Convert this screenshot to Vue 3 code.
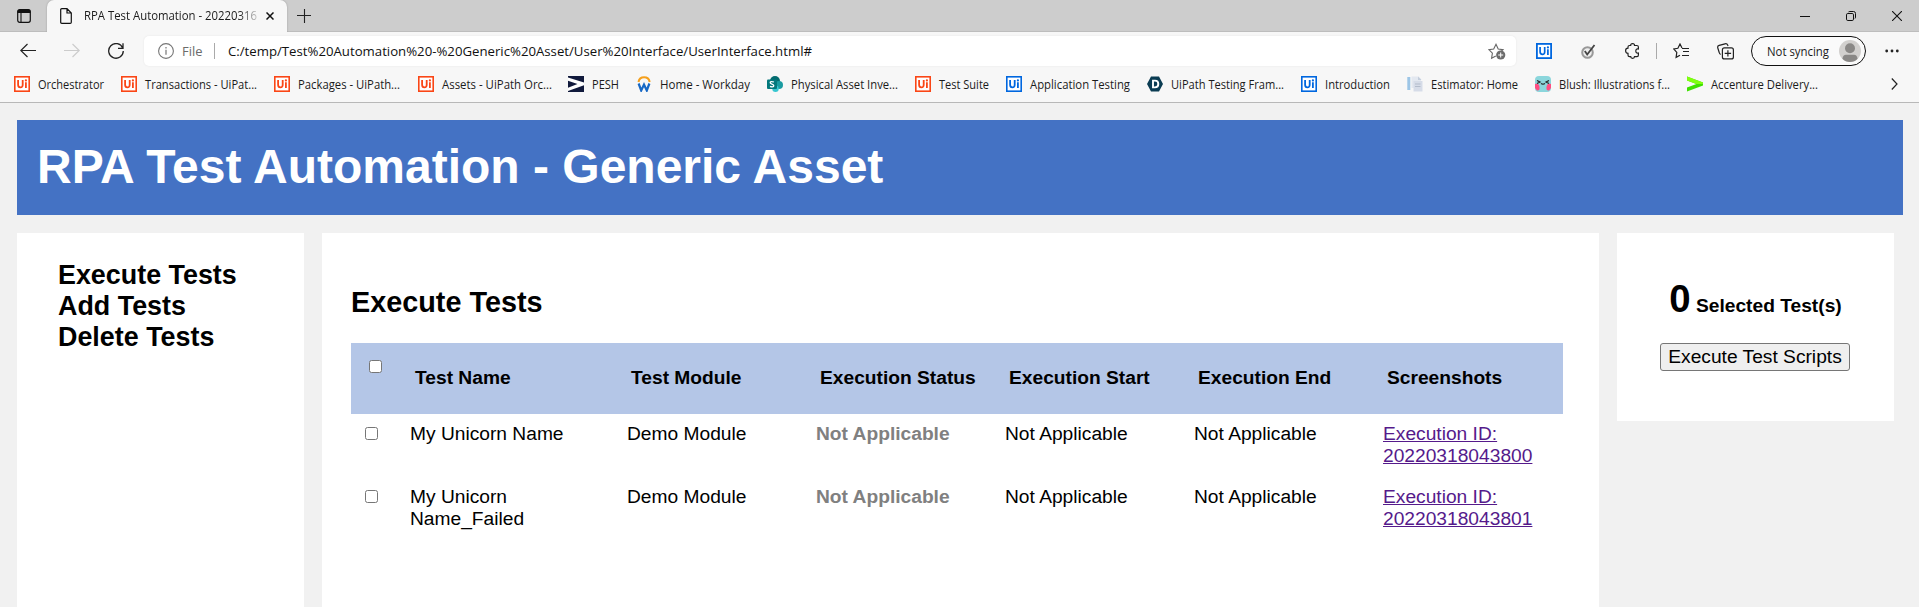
<script setup>
import { ref, h } from 'vue'

// Single line of interface text with a set advance width.
const FitText = (p) =>
  h('svg', { width: p.w + 2, height: 20, style: { display: 'block', flex: 'none', overflow: 'visible' } }, [
    h('text', { x: 0, y: 15, textLength: p.w, lengthAdjust: 'spacingAndGlyphs', fill: p.color || '#1b1b1b', 'font-size': p.size || 12, 'font-family': '"Open Sans", "Noto Sans", sans-serif' }, p.text),
  ])
FitText.props = ['w', 'text', 'size', 'color']

const bookmarks = [
  { t: 'Orchestrator', w: 66, slot: 107, i: 'ui', c: '#fa4616' },
  { t: 'Transactions - UiPat...', w: 112, slot: 153, i: 'ui', c: '#fa4616' },
  { t: 'Packages - UiPath...', w: 102, slot: 144, i: 'ui', c: '#fa4616' },
  { t: 'Assets - UiPath Orc...', w: 110, slot: 150, i: 'ui', c: '#fa4616' },
  { t: 'PESH', w: 27, slot: 68, i: 'pesh' },
  { t: 'Home - Workday', w: 90, slot: 131, i: 'workday' },
  { t: 'Physical Asset Inve...', w: 107, slot: 148, i: 'share' },
  { t: 'Test Suite', w: 50, slot: 91, i: 'ui', c: '#fa4616' },
  { t: 'Application Testing', w: 100, slot: 141, i: 'ui', c: '#0067df' },
  { t: 'UiPath Testing Fram...', w: 113, slot: 154, i: 'hex' },
  { t: 'Introduction', w: 65, slot: 106, i: 'ui', c: '#0067df' },
  { t: 'Estimator: Home', w: 87, slot: 128, i: 'doc' },
  { t: 'Blush: Illustrations f...', w: 111, slot: 152, i: 'blush' },
  { t: 'Accenture Delivery...', w: 107, slot: 140, i: 'acc' },
]
const menu = ['Execute Tests', 'Add Tests', 'Delete Tests']
const heads = ['Test Name', 'Test Module', 'Execution Status', 'Execution Start', 'Execution End', 'Screenshots']
const rows = ref([
  { name: 'My Unicorn Name', id: '20220318043800' },
  { name: 'My Unicorn Name_Failed', id: '20220318043801' },
])
</script>

<template>
  <div class="window">
    <header class="chrome">
      <div class="tabs">
        <svg class="workspace" width="16" height="16" viewBox="0 0 16 16"><rect x="1.7" y="1.7" width="12.6" height="12.6" rx="2" fill="none" stroke="#111" stroke-width="1.2"/><path d="M1.5 3.5Q1.500 1.500 4 1.500H12Q14.500 1.500 14.500 3.500V5H1.500Z" fill="#111"/><path d="M5 5V14" stroke="#111" stroke-width="1.1"/></svg>
        <div class="tab">
          <svg width="12" height="16" viewBox="0 0 12 16" fill="none" stroke="#111" stroke-width="1.2"><path d="M1.8.7H7L11.3 5V14.2Q11.3 15.3 10.2 15.3H1.8Q.7 15.3.7 14.2V1.8Q.7.7 1.8.7ZM7 .7V5H11.3"/></svg>
          <div class="tab-title"><FitText text="RPA Test Automation - 20220316" :w="173" /></div>
          <svg class="tab-close" width="8" height="8" viewBox="0 0 8 8"><path d="M.5.5 7.5 7.5M7.5.5.5 7.5" stroke="#111" stroke-width="1.5"/></svg>
        </div>
        <svg class="plus" width="14" height="14" viewBox="0 0 14 14"><path d="M7.5 0V14M0 6.500H14" stroke="#222" stroke-width="1.1"/></svg>
        <div class="win-controls">
          <svg width="10" height="10" viewBox="0 0 10 10"><path d="M0 5.5H10" stroke="#111"/></svg>
          <svg width="10" height="10" viewBox="0 0 10 10" fill="none" stroke="#111"><rect x=".5" y="2.5" width="7" height="7" rx="1.3"/><path d="M2.5.9Q3 .5 4 .5H7.5Q9.5.5 9.5 2.5V6Q9.5 7 9 7.5"/></svg>
          <svg width="10" height="10" viewBox="0 0 10 10"><path d="M0 0 10 10M10 0 0 10" stroke="#111" stroke-width="1.1"/></svg>
        </div>
      </div>

      <div class="toolbar">
        <svg class="nav" width="16" height="16" viewBox="0 0 16 16" fill="none" stroke="#222" stroke-width="1.2"><path d="M7.5 1 .8 7.500 7.5 14M.8 7.500H16"/></svg>
        <svg class="nav" width="16" height="16" viewBox="0 0 16 16" fill="none" stroke="#ccc" stroke-width="1.2"><path d="M8.5 1 15.2 7.500 8.5 14M15.2 7.500H0"/></svg>
        <svg class="nav" width="16" height="16" viewBox="0 0 16 16" fill="none" stroke="#222" stroke-width="1.3"><path d="M14.7 5A7.3 7.3 0 1 0 15.3 8M15 .3V5.3H10"/></svg>
        <div class="address">
          <svg width="16" height="16" viewBox="0 0 16 16"><circle cx="8" cy="8" r="7.4" fill="none" stroke="#767676" stroke-width="1.1"/><path d="M8 6.8V11.8M8 4V5.4" stroke="#767676" stroke-width="1.2"/></svg>
          <div class="file"><FitText text="File" :w="20.5" :size="13.5" color="#6b6b6b" /></div>
          <i class="rule"></i>
          <FitText text="C:/temp/Test%20Automation%20-%20Generic%20Asset/User%20Interface/UserInterface.html#" :w="584" :size="13.5" color="#111" />
          <svg class="fav-add" width="18" height="17" viewBox="0 0 18 17"><path d="M7.8 13 3.6 15.2 4.4 10.2.9 6.7 5.7 6 8 1.3 10.2 6 15 6.7 13 8.5" fill="none" stroke="#666" stroke-width="1.1"/><circle cx="12.7" cy="12" r="4.6" fill="#6c6c6c"/><path d="M12.7 9.5V14.5M10.2 12H15.2" stroke="#fff"/></svg>
        </div>
        <div class="ext">
          <svg class="e1" width="16" height="16" viewBox="0 0 16 16"><rect x=".9" y=".9" width="14.2" height="14.2" fill="#fff" stroke="#0067df" stroke-width="1.8"/><path d="M4.1 4V8.8Q4.1 11.4 6.4 11.4T8.7 8.8V4M11.9 6.3V12" fill="none" stroke="#0067df" stroke-width="1.7"/><circle cx="11.9" cy="4.4" r="1.1" fill="#0067df"/></svg>
          <svg class="e2" width="15" height="15" viewBox="0 0 15 15"><circle cx="6.5" cy="8.500" r="5.3" fill="#eee" stroke="#999" stroke-width="2"/><path d="M3.8 7 6.2 10.500 13.5 1" fill="none" stroke="#444" stroke-width="1.8"/></svg>
          <svg class="e3" width="15" height="16" viewBox="0 0 15 16"><path d="M3 5.200V4Q3 2.500 4.500 2.500H5.700Q5.500.600 7.600.600T9.500 2.500H11.800Q13.400 2.500 13.400 4V6Q10.800 5.600 10.800 8T13.400 10V12Q13.400 13.600 12 13.600H9.500Q9.500 15.400 7.600 15.400T5.700 13.600H4.500Q3 13.600 3 12V10.300Q.600 10.300.600 7.800T3 5.200Z" fill="none" stroke="#222" stroke-width="1.2"/></svg>
          <i class="rule e4"></i>
          <svg class="e5" width="17" height="16" viewBox="0 0 17 16" fill="none" stroke="#222" stroke-width="1.2"><path d="M9 4.9 7 1 4.9 5.3.7 6 3.8 9.4 3.1 14.4 7 12.3M9 5.500H16M10 8.500H16M9 12.500H16"/></svg>
          <svg class="e6" width="17" height="17" viewBox="0 0 17 17" fill="none" stroke="#222" stroke-width="1.2"><path d="M3.7 11.4Q2.5 11 2.2 9.5L.8 5Q.2 3 2.2 2.4L8 .8Q10 .3 10.8 2.2L11 3"/><rect x="5.4" y="4.9" width="11" height="11" rx="2"/><path d="M10.9 7.2V13.6M7.7 10.4H14.1"/></svg>
        </div>
        <div class="profile">
          <FitText text="Not syncing" :w="62" />
          <svg width="22" height="22" viewBox="0 0 22 22"><circle cx="11" cy="11" r="11" fill="#d2d0ce"/><circle cx="11" cy="8.3" r="5" fill="#8a8886"/><path d="M3.4 18.7Q4 14.7 7 14.7H15Q18 14.7 18.6 18.7Q15.500 22 11 22T3.400 18.700Z" fill="#8a8886"/></svg>
        </div>
        <svg class="more" width="14" height="4" viewBox="0 0 14 4" fill="#222"><circle cx="1.7" cy="2" r="1.4"/><circle cx="7" cy="2" r="1.4"/><circle cx="12.3" cy="2" r="1.4"/></svg>
      </div>

      <div class="bookmarks">
        <div v-for="b in bookmarks" :key="b.t" class="bookmark" :style="{ width: b.slot + 'px' }">
          <svg width="16" height="16" viewBox="0 0 16 16">
            <g v-if="b.i === 'ui'"><rect x=".8" y=".8" width="14.4" height="14.4" fill="#fff" :stroke="b.c" stroke-width="1.6"/><path d="M4.1 4V8.8Q4.1 11.4 6.4 11.4T8.7 8.8V4M11.9 6.3V12" fill="none" :stroke="b.c" stroke-width="1.8"/><circle cx="11.9" cy="4.4" r="1.1" :fill="b.c"/></g>
            <g v-else-if="b.i === 'pesh'"><path d="M0 0H16V16H0Z" fill="#111a3c"/><path d="M0 1.5 16 6.5V9.3L0 15V11.7L9.5 8 0 4.8Z" fill="#fff"/></g>
            <g v-else-if="b.i === 'workday'" fill="none"><path d="M2.5 6A5.700 5.700 0 0 1 13.7 6" stroke="#f5a01d" stroke-width="2"/><path d="M2.6 7.5 5.2 14.5 8 8.5 10.8 14.5 13.4 7.5" stroke="#1768c5" stroke-width="2.2"/></g>
            <g v-else-if="b.i === 'share'"><circle cx="8" cy="5" r="5" fill="#036c70"/><circle cx="12" cy="9" r="4" fill="#1a9ba1"/><circle cx="8.5" cy="12.8" r="3.2" fill="#37c6d0"/><rect y="3.5" width="10" height="9.5" rx="1" fill="#03787c"/><path d="M7 6Q3.2 4.9 3.2 6.7C3.2 8.3 6.8 7.9 6.8 9.7 6.8 11.3 4.5 11 3 10.4" fill="none" stroke="#fff" stroke-width="1.3"/></g>
            <g v-else-if="b.i === 'hex'"><path d="M4 .5H12L16 8 12 15.5H4L0 8Z" fill="#0b3c53"/><path d="M6 4.6H8Q11.3 4.6 11.3 8T8 11.4H6Z" fill="none" stroke="#fff" stroke-width="1.9"/></g>
            <g v-else-if="b.i === 'doc'"><rect x=".3" y="1" width="3" height="13" fill="#9cc5e6"/><path d="M4.500.5H11.5L14 3V12H4.500Z" fill="#e3e8f0"/><path d="M6.500 5H15.500V15.500H6.500Z" fill="#d6dce8"/><path d="M8 8H13.500M8 10.500H13.500" stroke="#b3bccb"/><path d="M11 .5V4H14.500" fill="#c3cddb"/></g>
            <g v-else-if="b.i === 'blush'"><rect width="16" height="16" rx="4" fill="#8bd6dc"/><path d="M0 8Q4 7 4.500 11T2 14.500L0 12ZM16 8Q12 7 11.500 11T14 14.500L16 12Z" fill="#ff4d82"/><path d="M2 4.500 5 6 2 7.500M14 4.500 11 6 14 7.500M6 7.500Q8 8.800 10 7.500" fill="none" stroke="#222" stroke-width="1.2"/></g>
            <g v-else><path d="M0 .5 16 6.5V9.5L0 15.5V11.5L9.5 8 0 4.500Z" fill="#3fe000"/><path d="M0 .5 16 6.5V8H9.5L0 4.500Z" fill="#80ff10"/></g>
          </svg>
          <FitText :text="b.t" :w="b.w" />
        </div>
        <svg class="chevron" width="7" height="12" viewBox="0 0 7 12"><path d="M.8.5 6 6 .8 11.5" fill="none" stroke="#222" stroke-width="1.2"/></svg>
      </div>
    </header>

    <main class="page">
      <div class="banner"><h1>RPA Test Automation - Generic Asset</h1></div>
      <div class="columns">
        <nav class="menu"><div v-for="m in menu" :key="m">{{ m }}</div></nav>
        <section class="content">
          <h2>Execute Tests</h2>
          <div class="row head">
            <span class="box"></span>
            <b v-for="t in heads" :key="t">{{ t }}</b>
          </div>
          <div v-for="r in rows" :key="r.id" class="row">
            <span class="box"></span>
            <span class="name">{{ r.name }}</span>
            <span>Demo Module</span>
            <span class="status">Not Applicable</span>
            <span>Not Applicable</span>
            <span>Not Applicable</span>
            <a>Execution ID: {{ r.id }}</a>
          </div>
        </section>
        <aside class="run">
          <p><strong>0</strong> Selected Test(s)</p>
          <button>Execute Test Scripts</button>
        </aside>
      </div>
    </main>
  </div>
</template>

<style>
body { margin: 0; overflow: hidden; background: #f1f1f1; }
</style>

<style scoped>
* { box-sizing: border-box; }
.window { width: 1919px; height: 607px; overflow: hidden; display: flex; flex-direction: column; background: #f1f1f1; font-family: Arial, "Liberation Sans", sans-serif; color: #000; }
svg { display: block; flex: none; }
.chrome { height: 103px; flex: none; background: #f7f7f7; border-bottom: 1px solid #b8b8b8; }
.tabs { height: 32px; display: flex; background: #cdcdcd; box-shadow: inset 0 -1px #bdbdbd; }
.workspace { margin: 8px 0 0 16px; }
.tab { width: 240px; height: 32px; margin-left: 15px; padding: 0 0 0 13px; background: #f7f7f7; border-radius: 7px 7px 0 0; display: flex; align-items: center; box-shadow: 0 0 2px #999; clip-path: inset(0 -2px 0 -2px); }
.tab-title { margin: -2px 0 0 12px; height: 20px; width: 176px; mask-image: linear-gradient(to right, #000 155px, transparent 178px); }
.tab-close { margin-left: 6px; }
.plus { margin: 9px 0 0 10px; }
.win-controls { margin: 11px 17px 0 auto; display: flex; gap: 36px; }
.toolbar { height: 38px; display: flex; align-items: center; padding-left: 20px; }
.nav { margin-right: 28px; }
.nav + .nav + .nav { margin-right: 20px; }
.address { width: 1372px; height: 30px; background: #fff; border-radius: 5px; display: flex; align-items: center; padding-left: 14px; box-shadow: 0 0 2px #e4e4e4; }
.file { margin-left: 8px; }
.rule { width: 1px; height: 16px; background: #aaa; flex: none; }
.address .rule { margin: 0 13px 0 9px; }
.fav-add { margin: 0 10px 0 auto; }
.ext { display: flex; align-items: center; width: 235px; }
.e1 { margin-left: 20px; }
.e2 { margin-left: 29px; }
.e3 { margin-left: 29px; }
.e4 { margin-left: 16px; }
.e5 { margin-left: 16px; }
.e6 { margin-left: 27px; }
.profile { width: 115px; height: 30px; border: 1px solid #111; border-radius: 15px; display: flex; align-items: center; padding-left: 15px; gap: 8px; background: #fafafa; }
.more { margin-left: 19px; }
.bookmarks { height: 32px; display: flex; align-items: center; padding: 0 0 4px 14px; }
.bookmark { display: flex; align-items: center; gap: 8px; flex: none; }
.bookmark > svg:last-child { margin-top: -1px; }
.chevron { margin-left: 64px; }
.page { padding: 17px 16px 0 17px; }
.banner { height: 95px; background: #4472c4; padding: 19px 20px; }
h1 { margin: 0; color: #fff; font-size: 48px; line-height: 55px; white-space: nowrap; }
.columns { display: flex; align-items: flex-start; margin-top: 18px; }
.menu { width: 287px; height: 374px; background: #fff; padding: 27px 0 0 41px; font-size: 26.88px; font-weight: 700; line-height: 31px; }
.content { width: 1277px; height: 374px; margin-left: 18px; background: #fff; padding: 53px 36px 0 29px; font-size: 19.2px; }
h2 { margin: 0 0 24px; font-size: 28.8px; line-height: 33px; }
.row { display: grid; grid-template-columns: 59px 217px 189px 189px 189px 189px 180px; line-height: 22px; height: 63px; padding-top: 9px; }
.row.head { height: 71px; background: #b4c6e7; padding-top: 24px; }
.row.head b { padding-left: 4px; }
.row.head b:nth-child(2) { padding-left: 5px; }
.row.head .box { margin: -7px 0 0 18px; }
.box { width: 13px; height: 13px; background: #fff; border: 1px solid #767676; border-radius: 2.5px; margin: 4px 0 0 14px; }
.name { padding-right: 50px; }
.status { font-weight: 700; color: #808080; }
a { color: #551a8b; text-decoration: underline; padding-right: 20px; }
.run { width: 277px; height: 188px; margin-left: 18px; background: #fff; display: flex; flex-direction: column; align-items: center; padding-top: 44px; }
.run p { margin: 0; font-size: 19.2px; font-weight: 700; line-height: 44px; height: 44px; white-space: nowrap; }
.run strong { font-size: 38.4px; }
.run button { margin: 22px 1px 0 0; width: 190px; height: 28px; border: 1px solid #767676; border-radius: 3px; background: #efefef; padding: 0; color: #000; font: 19.2px/24px Arial, "Liberation Sans", sans-serif; white-space: nowrap; }
</style>
